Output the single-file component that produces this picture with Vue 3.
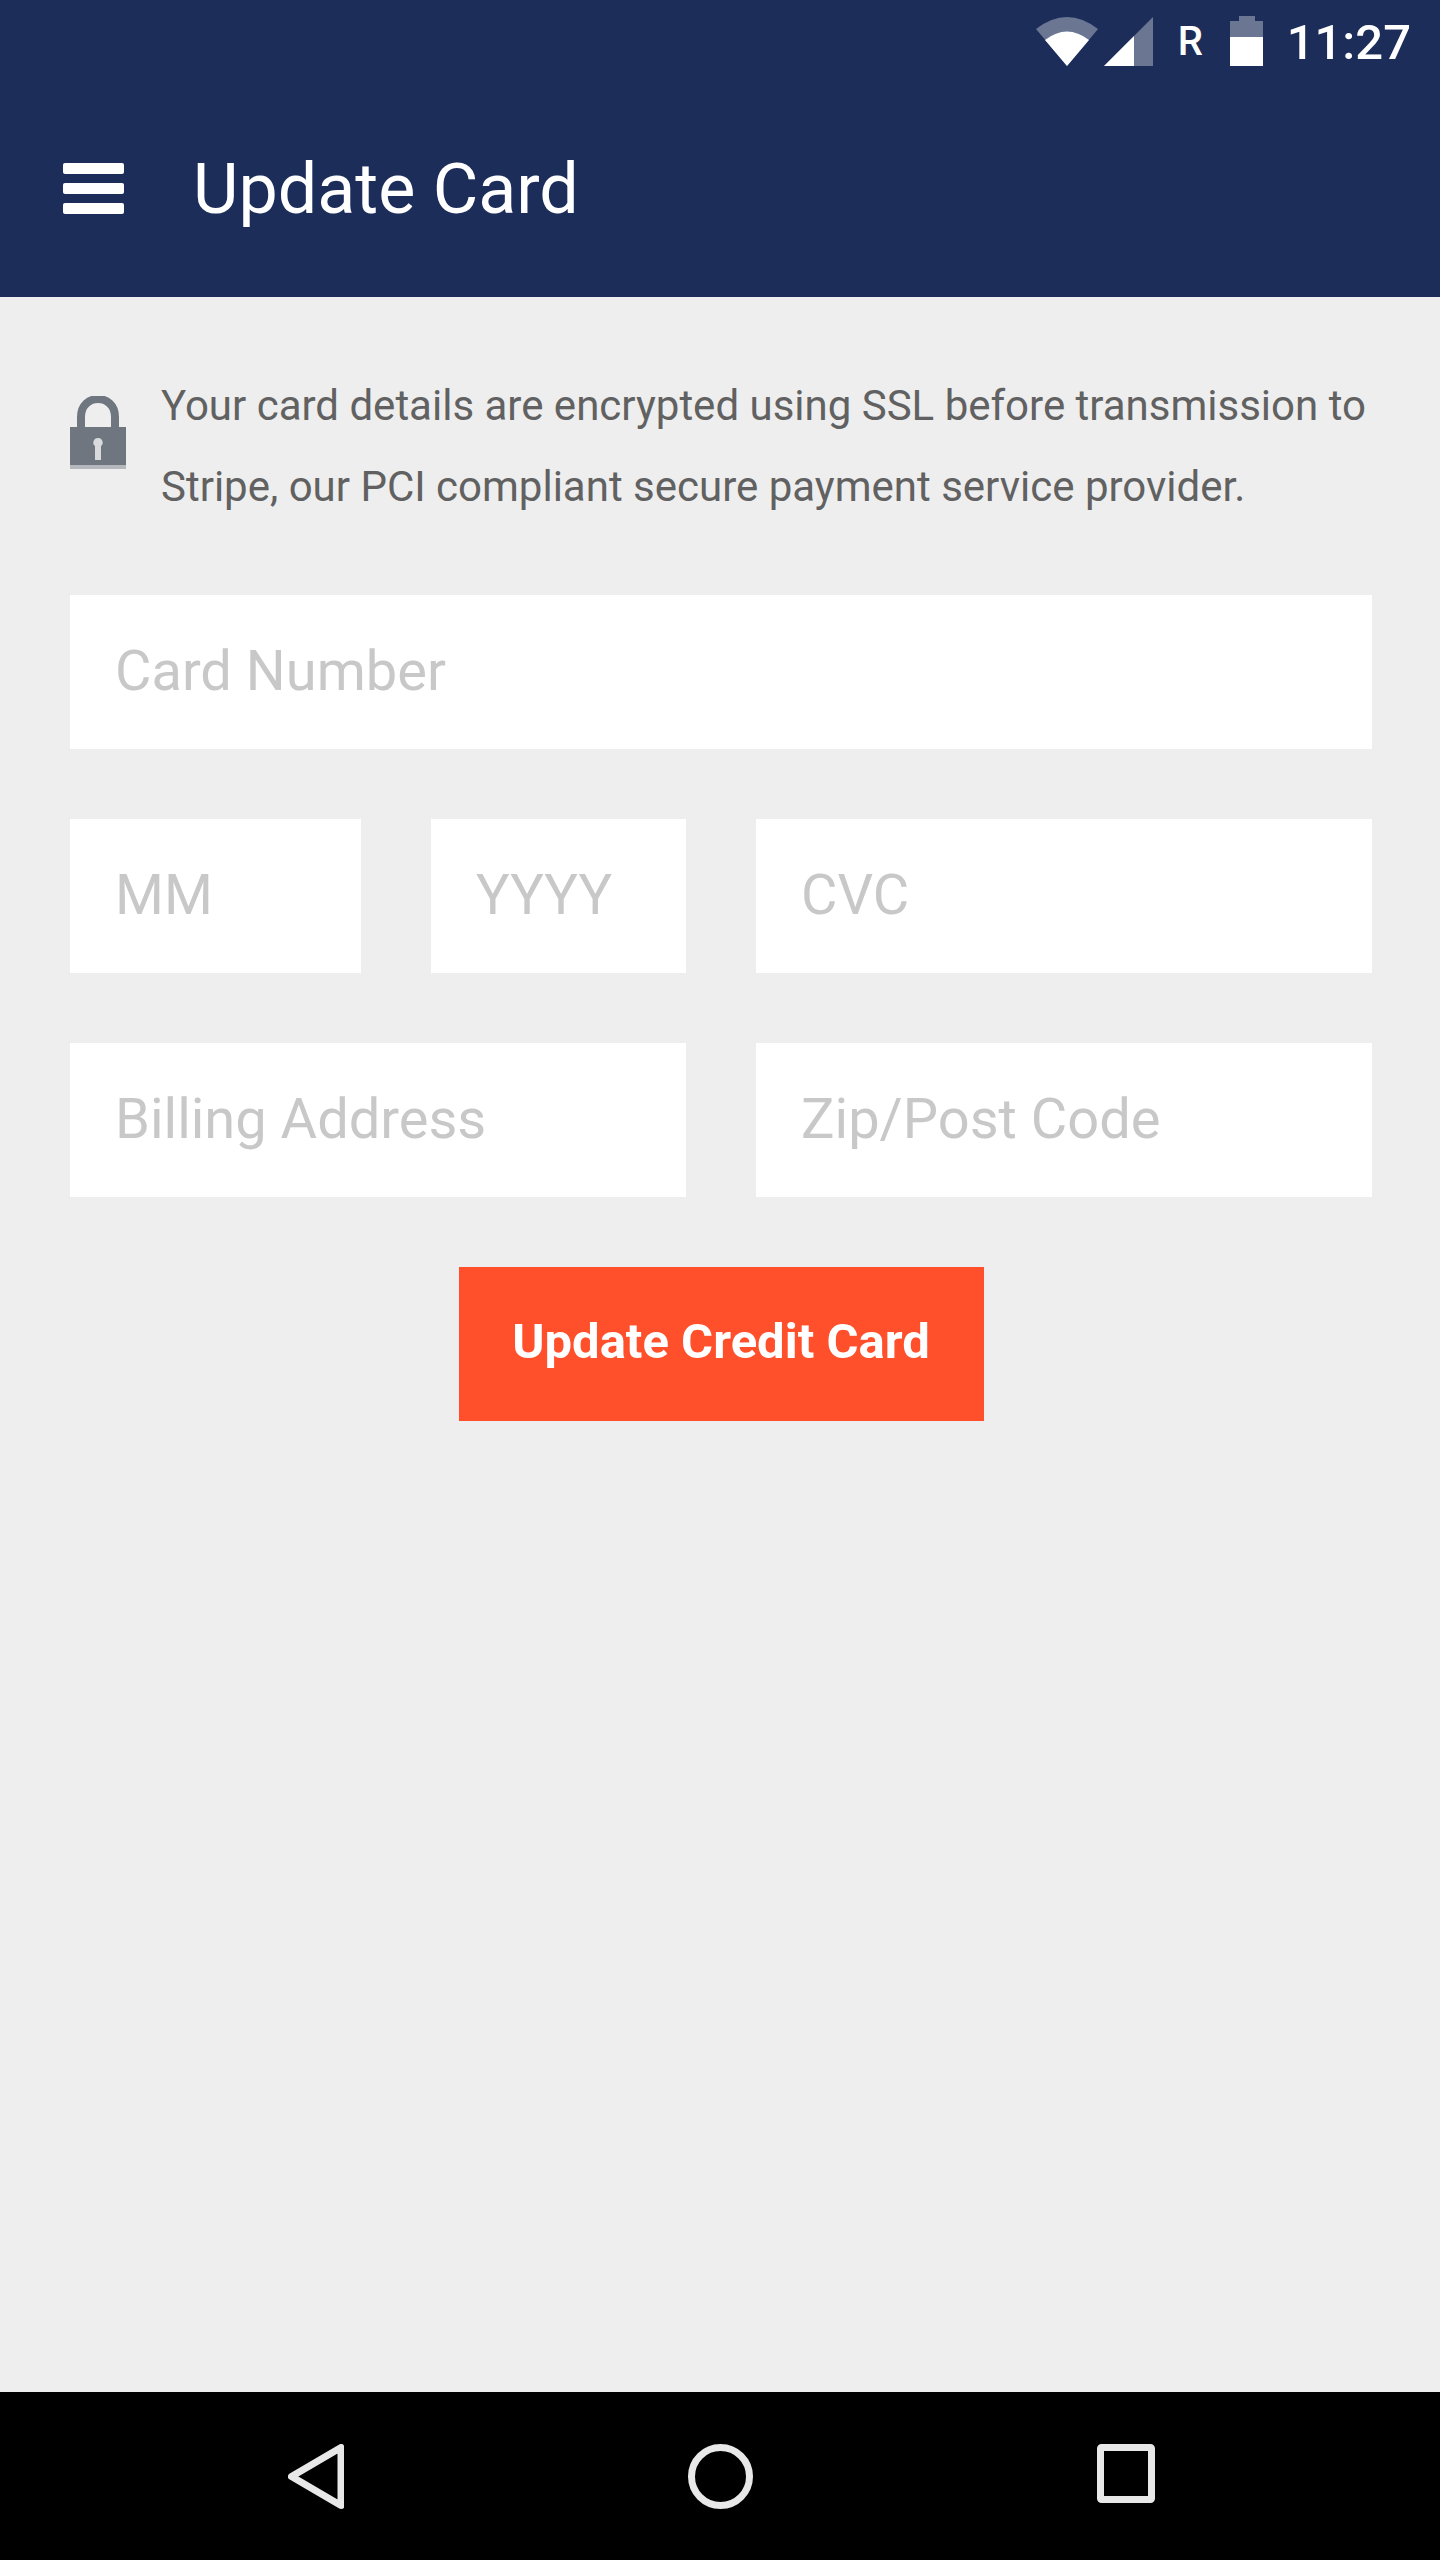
<script setup>
const lines = ['Your card details are encrypted using SSL before transmission to', 'Stripe, our PCI compliant secure payment service provider.']
</script>

<template>
  <div class="screen">
    <header class="header">
      <div class="status">
        <svg class="wifi" width="62" height="49" viewBox="0 0 62 49">
          <path d="M0 12 Q31 -12 62 12 L31 49Z" fill="#fff" fill-opacity=".35" />
          <path d="M9 23 Q31 6 53 23 L31 49Z" fill="#fff" />
        </svg>
        <svg class="signal" width="49" height="49" viewBox="0 0 49 49">
          <path d="M49 0V49H0Z" fill="#fff" fill-opacity=".35" />
          <path d="M30 19V49H0Z" fill="#fff" />
        </svg>
        <span class="roam">R</span>
        <svg class="battery" width="33" height="50" viewBox="0 0 33 50">
          <path d="M9 0H25V5H33V22H0V5H9Z" fill="#fff" fill-opacity=".35" />
          <rect y="21" width="33" height="29" fill="#fff" />
        </svg>
        <span class="time">11:27</span>
      </div>
      <div class="toolbar">
        <div class="burger"><i></i><i></i><i></i></div>
        <h1 class="title">Update Card</h1>
      </div>
    </header>

    <main class="content">
      <div class="notice">
        <svg class="lock" width="56" height="73" viewBox="0 0 56 73">
          <path d="M11 34V21C11 -3 45 -3 45 21V34" fill="none" stroke="#6f7680" stroke-width="8" />
          <rect y="31" width="56" height="38" fill="#6f7680" />
          <rect y="69" width="56" height="4" fill="#b4b8bd" />
          <path d="M28 42a4.500 4.500 0 0 1 3 8v14h-6V50a4.500 4.500 0 0 1 3-8z" fill="#d8dadc" />
        </svg>
        <p class="notice-text"><span v-for="l in lines" :key="l" class="line">{{ l }}</span></p>
      </div>

      <div class="field">Card Number</div>
      <div class="row row-three">
        <div class="field">MM</div>
        <div class="field">YYYY</div>
        <div class="field">CVC</div>
      </div>
      <div class="row row-two">
        <div class="field">Billing Address</div>
        <div class="field">Zip/Post Code</div>
      </div>
      <button class="submit">Update Credit Card</button>
    </main>

    <nav class="navbar">
      <svg width="56" height="65" viewBox="0 0 56 65">
        <path d="M53 3.5V61.500L3.500 32.500Z" fill="none" stroke="#e8e8e8" stroke-width="7" stroke-linejoin="round" />
      </svg>
      <svg width="65" height="65" viewBox="0 0 65 65">
        <circle cx="32.500" cy="32.500" r="29" fill="none" stroke="#e8e8e8" stroke-width="7" />
      </svg>
      <svg width="58" height="59" viewBox="0 0 58 59">
        <rect x="3.500" y="3.500" width="51" height="52" rx="1" fill="none" stroke="#e8e8e8" stroke-width="7" />
      </svg>
    </nav>
  </div>
</template>

<style>
html, body { margin: 0; background: #eeeeee; }
</style>

<style scoped>
.screen {
  width: 1440px;
  height: 2560px;
  display: flex;
  flex-direction: column;
  background: #eeeeee;
  font-family: Roboto, "Liberation Sans", sans-serif;
}
.header {
  height: 297px;
  background: #1c2d5a;
  color: #fff;
  flex: none;
}
.status {
  height: 84px;
  display: flex;
  align-items: flex-start;
  justify-content: flex-end;
  padding-right: 29px;
  box-sizing: border-box;
}
.wifi { margin-top: 17px; }
.signal { margin: 17px 0 0 6px; }
.roam {
  margin: 21px 0 0 25px;
  font-size: 40px;
  line-height: 42px;
  font-weight: 500;
  width: 26px;
}
.battery { margin: 16px 0 0 26px; }
.time {
  margin: 14px 0 0 24px;
  font-size: 49px;
  line-height: 58px;
  font-weight: 500;
}
.toolbar {
  display: flex;
  align-items: center;
  padding-left: 63px;
  height: 213px;
  box-sizing: border-box;
  padding-bottom: 4px;
}
.burger {
  width: 61px;
  display: flex;
  flex-direction: column;
  gap: 9px;
}
.burger i {
  display: block;
  height: 11px;
  border-radius: 2px;
  background: #fff;
}
.title {
  margin: 0 0 0 69px;
  font-size: 70px;
  font-weight: 400;
  line-height: 82px;
}
.content {
  flex: 1;
  padding: 0 68px 0 70px;
  display: flex;
  flex-direction: column;
}
.notice {
  display: flex;
  align-items: flex-start;
  padding-top: 68px;
  height: 298px;
  box-sizing: border-box;
}
.lock { margin-top: 31px; flex: none; filter: blur(0.6px); }
.notice-text {
  margin: 0 0 0 35px;
  font-size: 42px;
  line-height: 81px;
  color: #616161;
  white-space: nowrap;
}
.line { display: block; }
.field {
  height: 154px;
  background: #fff;
  color: #c8c8c8;
  font-size: 56px;
  line-height: 152px;
  padding-left: 45px;
  box-sizing: border-box;
  white-space: nowrap;
}
.row {
  display: grid;
  gap: 70px;
  margin-top: 70px;
}
.row-three { grid-template-columns: 291px 255px 1fr; }
.row-two { grid-template-columns: 616px 1fr; }
.submit {
  align-self: center;
  margin: 70px 0 0 0;
  width: 525px;
  height: 154px;
  padding: 0 0 6px;
  border: 0;
  background: #ff4f2b;
  color: #fff;
  font: 700 49px Roboto, "Liberation Sans", sans-serif;
}
.navbar {
  flex: none;
  height: 168px;
  background: #000;
  display: flex;
  justify-content: center;
  align-items: flex-start;
  padding: 52px 0 0 3px;
  box-sizing: border-box;
  gap: 344px;
}
</style>
